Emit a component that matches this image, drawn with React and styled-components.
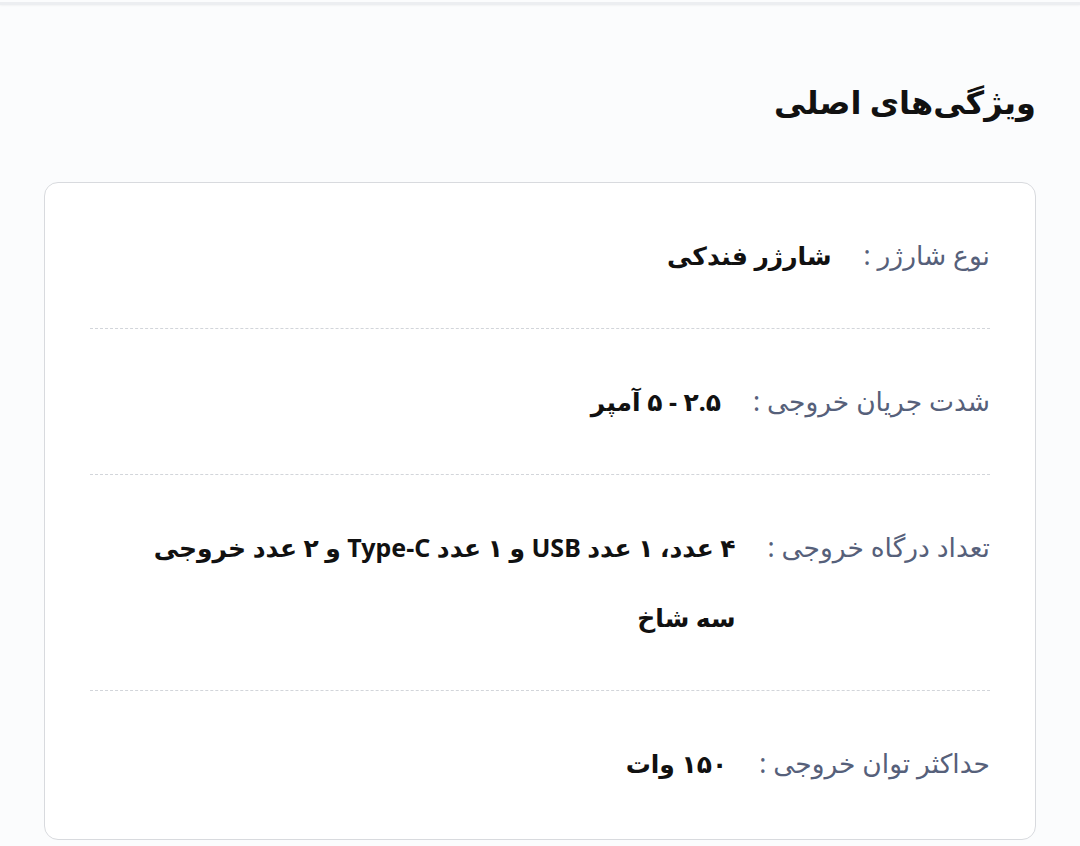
import React from 'react';
import styled, { createGlobalStyle } from 'styled-components';

const Global = createGlobalStyle`
  html, body {
    margin: 0;
    padding: 0;
    background: #fbfcfd;
  }
  body {
    font-family: "Noto Sans", "DejaVu Sans", sans-serif;
  }
`

const features = [
  { label: 'نوع شارژر', value: 'شارژر فندکی' },
  { label: 'شدت جریان خروجی', value: '۲.۵ - ۵ آمپر' },
  { label: 'تعداد درگاه خروجی', value: '۴ عدد، ۱ عدد USB و ۱ عدد Type-C و ۲ عدد خروجی سه شاخ' },
  { label: 'حداکثر توان خروجی', value: '۱۵۰ وات' },
]

function App() {
  return (
    <>
      <Global />
      <Page dir="rtl">
        <TopEdge />
        <Title>ویژگی‌های اصلی</Title>
        <Card>
          {features.map((f, i) => (
            <Row key={i} last={i === features.length - 1}>
              <Label>{f.label} :</Label>
              <Value>{f.value}</Value>
            </Row>
          ))}
        </Card>
      </Page>
    </>
  )
}

const Page = styled.div`
  width: 1080px;
  min-height: 846px;
  box-sizing: border-box;
  padding: 0 44px 6px 44px;
  background: #fbfcfd;
`
const TopEdge = styled.div`
  height: 3px;
  margin: 2px -44px 0;
  background: #eceef1;
  box-shadow: 0 1px 2px rgba(0,0,0,.04);
`
const Title = styled.h2`
  margin: 0;
  padding: 75px 0 58px;
  font-size: 32px;
  line-height: 44px;
  font-weight: 700;
  color: #111;
`
const Card = styled.div`
  background: #fff;
  border: 1.5px solid #d8dade;
  border-radius: 14px;
  padding: 0 45px 3px;
`
const Row = styled.div`
  display: flex;
  align-items: flex-start;
  gap: 32px;
  padding: 37px 0 38px;
  border-bottom: ${p => (p.last ? 'none' : '1.5px dashed #d2d5da')};
`
const Label = styled.div`
  white-space: nowrap;
  font-size: 26.5px;
  line-height: 70px;
  color: #56607a;
`
const Value = styled.div`
  flex: 1;
  font-size: 25px;
  line-height: 70px;
  font-weight: 700;
  color: #111;
  padding-left: 60px;
`

export default App
